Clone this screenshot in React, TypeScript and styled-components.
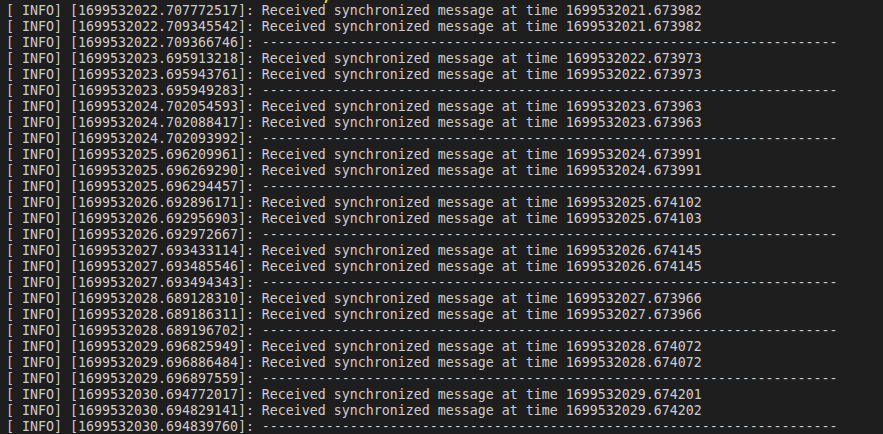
import React from "react";
import styled, { createGlobalStyle } from "styled-components";

const Global = createGlobalStyle`
  html, body {
    margin: 0;
    padding: 0;
    background: #1e1e1e;
  }
`;

const Terminal = styled.div`
  position: relative;
  width: 883px;
  height: 434px;
  overflow: hidden;
  background: #1e1e1e;
  box-sizing: border-box;
  padding: 3px 0 0 6px;
  display: flex;
  flex-direction: column;
`;

const Line = styled.div`
  font-family: "DejaVu Sans Mono", "Liberation Mono", monospace;
  font-size: 13.29px;
  line-height: 16px;
  height: 16px;
  flex-shrink: 0;
  color: #cccccc;
  white-space: pre;
`;

const Remnant = styled.span`
  position: absolute;
  left: 325px;
  top: 0;
  width: 2px;
  height: 3px;
  background: #e5e510;
  transform: skewX(-20deg);
`;

type Group = { ts: string[]; recv: string[] };

const groups: Group[] = [
  { ts: ["1699532022.707772517", "1699532022.709345542", "1699532022.709366746"], recv: ["1699532021.673982", "1699532021.673982"] },
  { ts: ["1699532023.695913218", "1699532023.695943761", "1699532023.695949283"], recv: ["1699532022.673973", "1699532022.673973"] },
  { ts: ["1699532024.702054593", "1699532024.702088417", "1699532024.702093992"], recv: ["1699532023.673963", "1699532023.673963"] },
  { ts: ["1699532025.696209961", "1699532025.696269290", "1699532025.696294457"], recv: ["1699532024.673991", "1699532024.673991"] },
  { ts: ["1699532026.692896171", "1699532026.692956903", "1699532026.692972667"], recv: ["1699532025.674102", "1699532025.674103"] },
  { ts: ["1699532027.693433114", "1699532027.693485546", "1699532027.693494343"], recv: ["1699532026.674145", "1699532026.674145"] },
  { ts: ["1699532028.689128310", "1699532028.689186311", "1699532028.689196702"], recv: ["1699532027.673966", "1699532027.673966"] },
  { ts: ["1699532029.696825949", "1699532029.696886484", "1699532029.696897559"], recv: ["1699532028.674072", "1699532028.674072"] },
  { ts: ["1699532030.694772017", "1699532030.694829141", "1699532030.694839760"], recv: ["1699532029.674201", "1699532029.674202"] },
];

const dashes = "-".repeat(72);

export default function App() {
  const lines: string[] = [];
  groups.forEach((g) => {
    lines.push(`[ INFO] [${g.ts[0]}]: Received synchronized message at time ${g.recv[0]}`);
    lines.push(`[ INFO] [${g.ts[1]}]: Received synchronized message at time ${g.recv[1]}`);
    lines.push(`[ INFO] [${g.ts[2]}]: ${dashes}`);
  });
  return (
    <>
      <Global />
      <Terminal>
        <Remnant />
        {lines.map((l, i) => (
          <Line key={i}>{l}</Line>
        ))}
      </Terminal>
    </>
  );
}
